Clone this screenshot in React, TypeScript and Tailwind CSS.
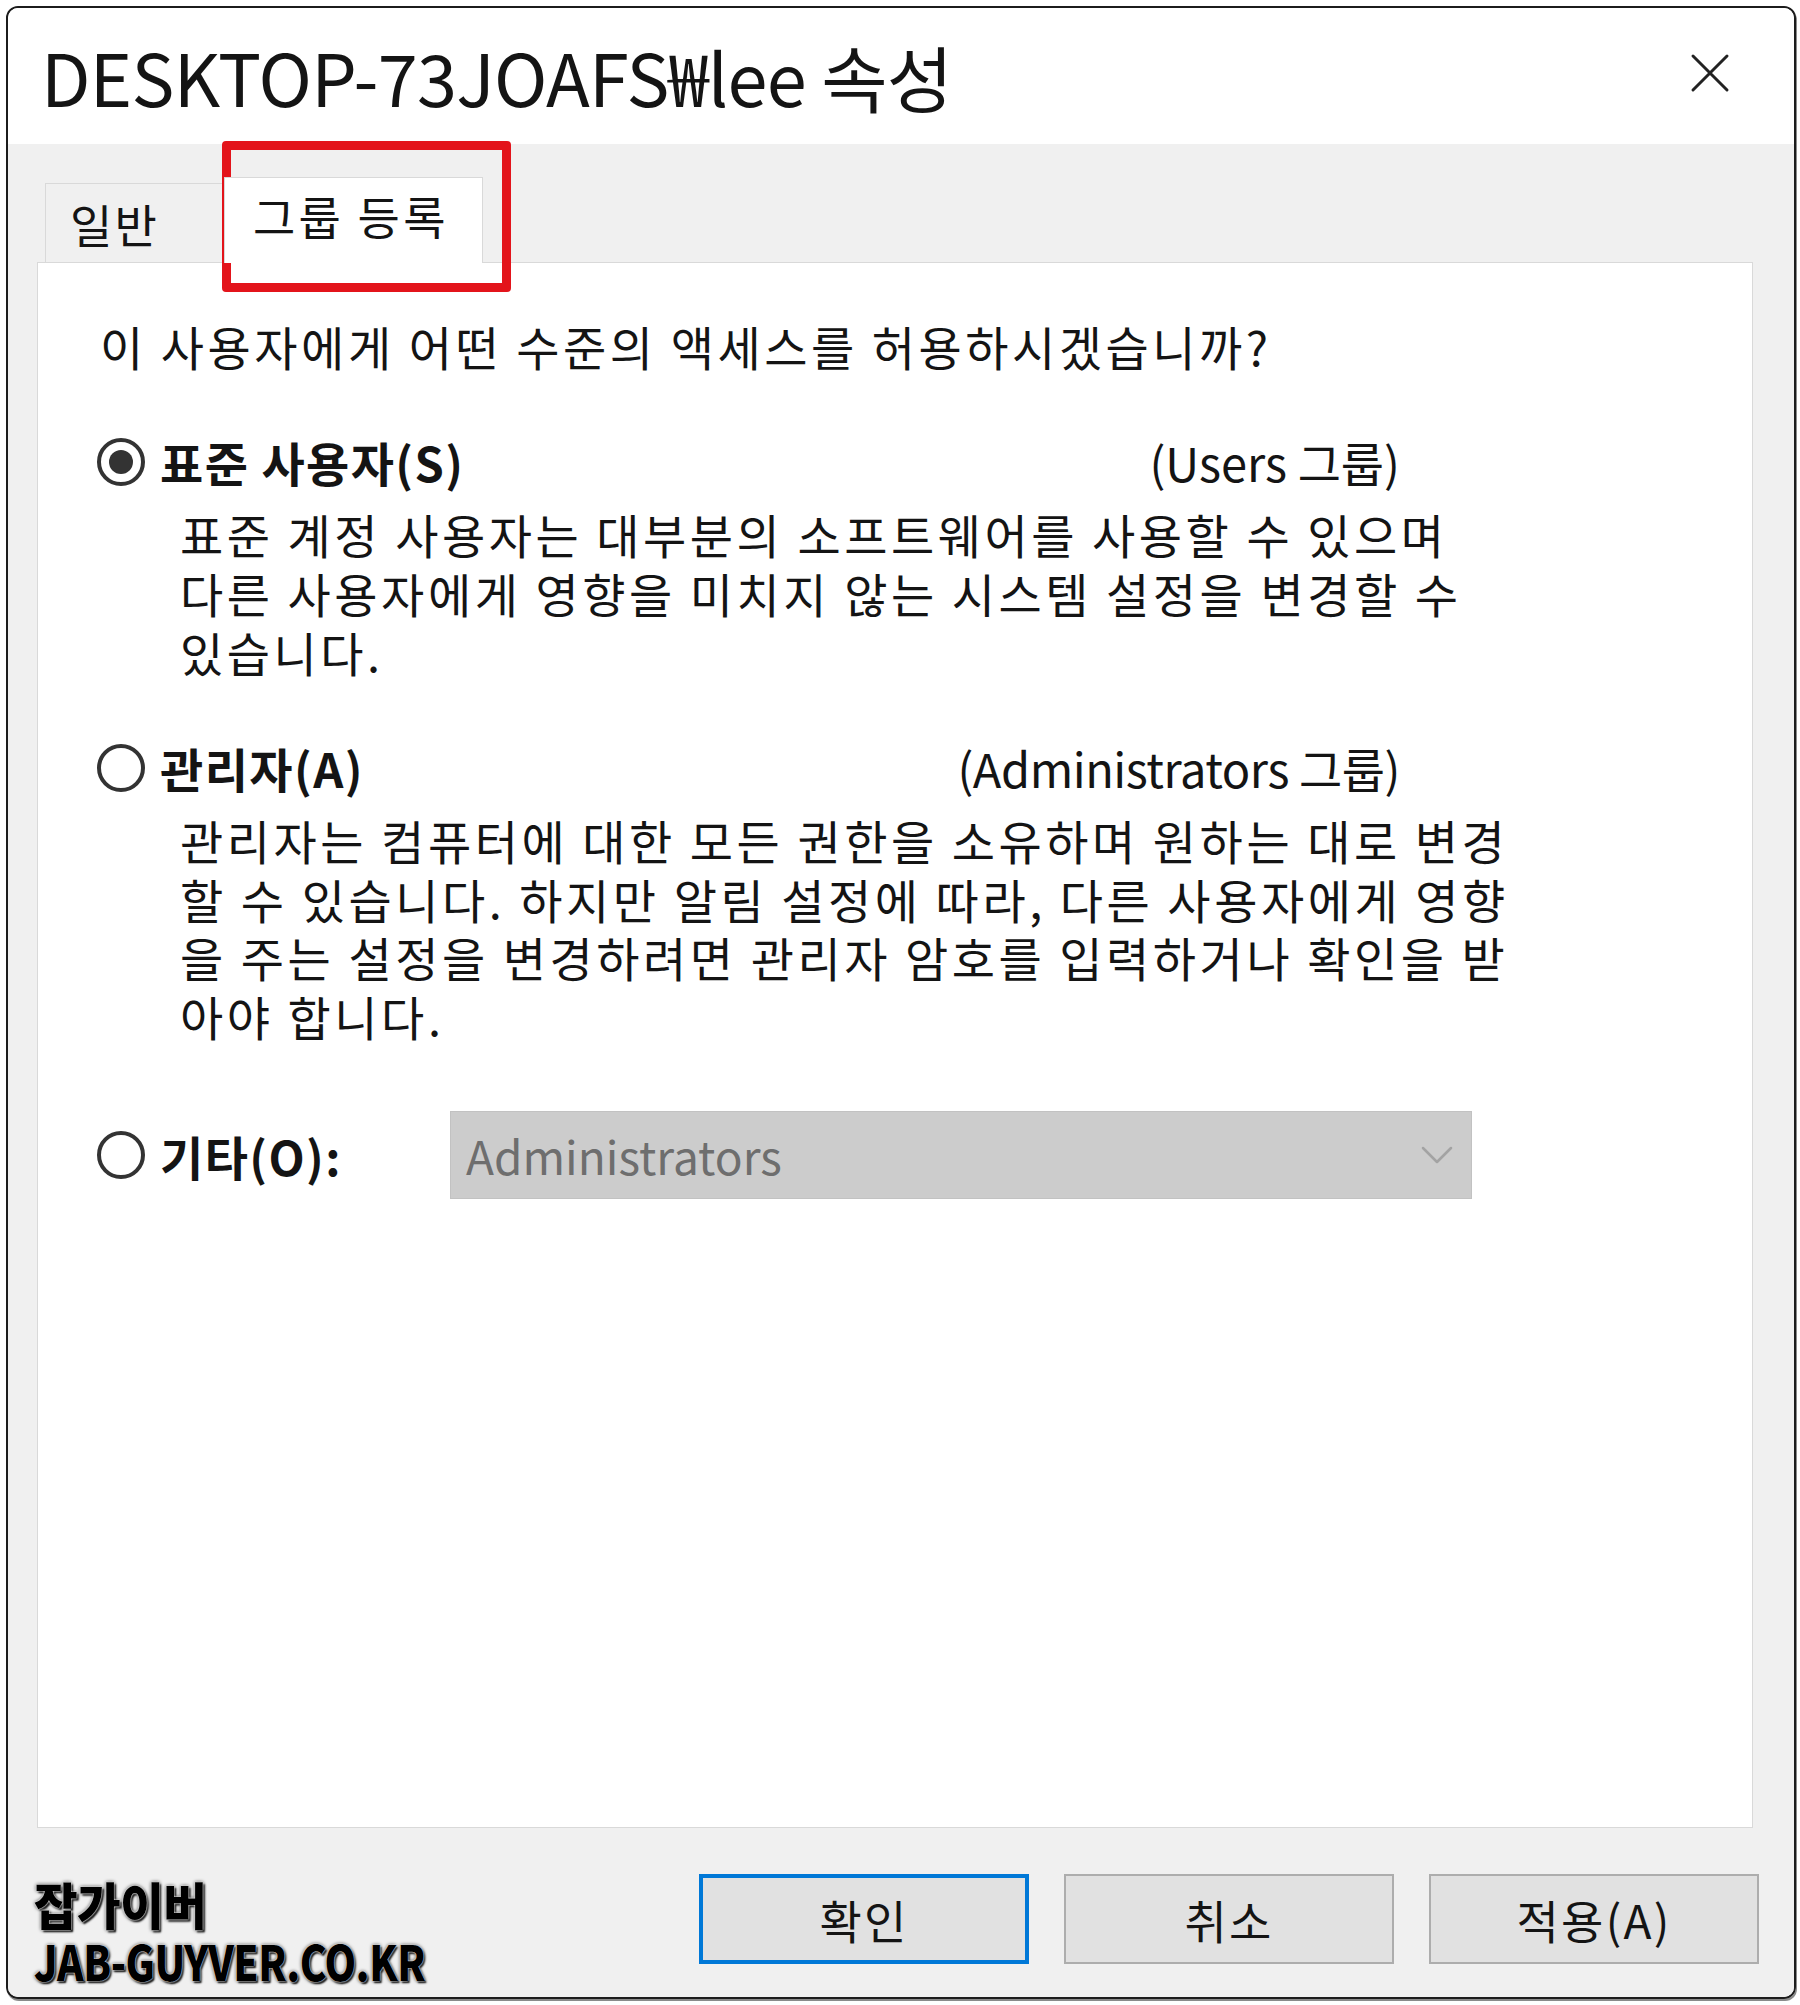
import { ChevronDown } from 'lucide-react'

const standardDesc = [
  '표준 계정 사용자는 대부분의 소프트웨어를 사용할 수 있으며',
  '다른 사용자에게 영향을 미치지 않는 시스템 설정을 변경할 수',
  '있습니다.',
]

const adminDesc = [
  '관리자는 컴퓨터에 대한 모든 권한을 소유하며 원하는 대로 변경',
  '할 수 있습니다. 하지만 알림 설정에 따라, 다른 사용자에게 영향',
  '을 주는 설정을 변경하려면 관리자 암호를 입력하거나 확인을 받',
  '아야 합니다.',
]

function Radio({ checked }: { checked?: boolean }) {
  return (
    <div className="w-[48px] h-[48px] shrink-0 rounded-full border-[4px] border-[#333333] flex items-center justify-center bg-white">
      {checked && <div className="w-[24px] h-[24px] rounded-full bg-[#333333]" />}
    </div>
  )
}

function Button({ label, primary }: { label: string; primary?: boolean }) {
  return (
    <div
      className={
        primary
          ? 'w-[330px] h-[90px] bg-[#e1e1e1] border-[4px] border-[#0078d7] flex items-center justify-center text-[46px] tracking-[0.05em]'
          : 'w-[330px] h-[90px] bg-[#e1e1e1] border-2 border-[#adadad] flex items-center justify-center text-[46px] tracking-[0.05em]'
      }
    >
      {label}
    </div>
  )
}

export default function App() {
  return (
    <div className="relative w-[1800px] h-[2005px] bg-white pl-[6px] pt-[6px] text-[#141414] font-['Noto_Sans_CJK_KR','Noto_Sans',sans-serif]">
      <div className="w-[1790px] h-[1993px] border-2 border-[#1c1c1c] rounded-[12px] overflow-hidden flex flex-col shadow-[1px_2px_0_#8a8a8a]">
        {/* title bar */}
        <div className="h-[136px] bg-white flex items-center justify-between pl-[33px] pr-[64px]">
          <span className="text-[72px] leading-none tracking-[-0.01em]">DESKTOP-73JOAFS₩lee 속성</span>
          <svg width="40" height="40" viewBox="0 0 40 40" className="mt-[-6px]">
            <path d="M3 3 L37 37 M37 3 L3 37" stroke="#222" strokeWidth="3" strokeLinecap="round" />
          </svg>
        </div>

        <div className="flex-1 bg-[#f0f0f0] flex flex-col">
          {/* tabs */}
          <div className="h-[118px] flex items-end pl-[37px]">
            <div className="w-[179px] h-[79px] border border-b-0 border-[#d9d9d9] bg-[#f0f0f0] pl-[24px] pt-[16px] text-[46px] leading-none tracking-[0.05em]">
              일반
            </div>
            <div className="relative z-10 w-[259px] h-[86px] -mb-px border border-b-0 border-[#d9d9d9] bg-white pl-[28px] pt-[14px] text-[46px] leading-none tracking-[0.07em]">
              그룹 등록
            </div>
          </div>

          {/* panel */}
          <div className="ml-[29px] w-[1716px] h-[1566px] bg-white border border-[#d9d9d9] pl-[59px]">
            <div className="w-[1303px] flex flex-col text-[47px]">
              <div className="mt-[53px] h-[59px] leading-[59px] ml-[3px] whitespace-nowrap tracking-[0.075em]">
                이 사용자에게 어떤 수준의 액세스를 허용하시겠습니까?
              </div>

              <div className="mt-[57px] h-[59px] flex items-center justify-between">
                <div className="flex items-center gap-[15px]">
                  <Radio checked />
                  <span className="font-bold leading-none tracking-[0.03em]">표준 사용자(S)</span>
                </div>
                <span className="leading-none">(Users 그룹)</span>
              </div>
              <div className="mt-[13px] ml-[83px] leading-[59px] whitespace-nowrap tracking-[0.075em]">
                {standardDesc.map((line, i) => (
                  <div key={i}>{line}</div>
                ))}
              </div>

              <div className="mt-[57px] h-[59px] flex items-center justify-between">
                <div className="flex items-center gap-[15px]">
                  <Radio />
                  <span className="font-bold leading-none tracking-[0.03em]">관리자(A)</span>
                </div>
                <span className="leading-none tracking-[-0.01em]">(Administrators 그룹)</span>
              </div>
              <div className="mt-[14px] ml-[83px] leading-[58.5px] whitespace-nowrap tracking-[0.075em]">
                {adminDesc.map((line, i) => (
                  <div key={i}>{line}</div>
                ))}
              </div>

              <div className="mt-[66px] h-[88px] flex items-center">
                <Radio />
                <span className="ml-[15px] w-[290px] shrink-0 font-bold leading-none tracking-[0.03em]">기타(O):</span>
                <div className="w-[1022px] shrink-0 h-[88px] bg-[#cccccc] border border-[#c2c2c2] flex items-center justify-between pl-[15px] pr-[6px]">
                  <span className="text-[#6e6e6e] text-[46px] leading-none">Administrators</span>
                  <ChevronDown className="w-[56px] h-[56px] text-[#a3a3a3]" strokeWidth={1.1} />
                </div>
              </div>
            </div>
          </div>

          {/* buttons */}
          <div className="flex justify-end gap-[35px] pr-[35px] pt-[46px]">
            <Button label="확인" primary />
            <Button label="취소" />
            <Button label="적용(A)" />
          </div>
        </div>
      </div>

      {/* red highlight around the active tab */}
      <div className="absolute left-[222px] top-[141px] w-[289px] h-[151px] border-[9px] border-[#e3141b] rounded-[4px]" />

      {/* watermark */}
      <div className="absolute left-[34px] top-[1878px] flex flex-col items-start font-black text-black leading-none tracking-[-0.04em] [text-shadow:0_0_2px_#fff,0_0_2px_#fff,0_0_4px_#000,2px_2px_2px_#000]">
        <span className="text-[50px] origin-left scale-x-[0.95]">잡가이버</span>
        <span className="text-[48px] mt-[8px] origin-left scale-x-[0.84]">JAB-GUYVER.CO.KR</span>
      </div>
    </div>
  )
}
